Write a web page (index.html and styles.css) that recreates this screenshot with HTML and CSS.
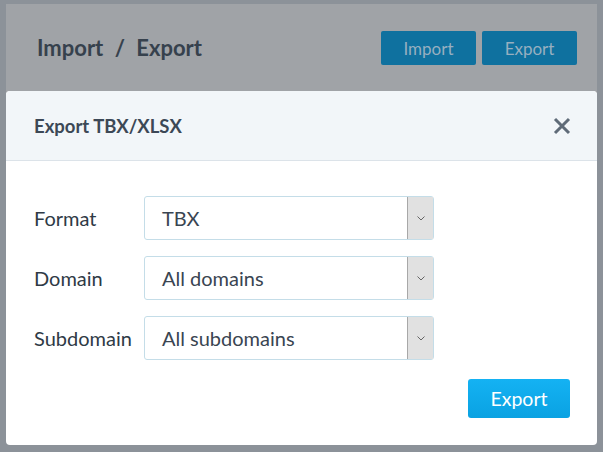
FILE: index.html
```html
<!DOCTYPE html>
<html lang="en">
<head>
    <meta charset="UTF-8">
    <meta name="viewport" content="width=device-width, initial-scale=1.0">
    <title>Import / Export</title>
    <link rel="stylesheet" href="styles.css">
</head>
<body>
    <div class="page">
        <div class="card">
            <h1>Import <span class="sep">/</span> Export</h1>
            <div class="actions">
                <button class="btn-dim">Import</button>
                <button class="btn-dim">Export</button>
            </div>
        </div>
    </div>

    <div class="modal">
        <div class="modal-header">
            <h2>Export TBX/XLSX</h2>
            <span class="close">
                <svg width="18" height="18" viewBox="0 0 18 18">
                    <path d="M2 2 L16 16 M16 2 L2 16" stroke="#5f6b78" stroke-width="3" stroke-linecap="butt" fill="none"/>
                </svg>
            </span>
        </div>
        <div class="modal-body">
            <div class="form-row">
                <label>Format</label>
                <div class="select">
                    <span class="value">TBX</span>
                    <span class="arrow"><svg width="8" height="5" viewBox="0 0 8 5"><path d="M0.5 0.5 L4 4 L7.5 0.5" stroke="#666" stroke-width="1" fill="none"/></svg></span>
                </div>
            </div>
            <div class="form-row">
                <label>Domain</label>
                <div class="select">
                    <span class="value">All domains</span>
                    <span class="arrow"><svg width="8" height="5" viewBox="0 0 8 5"><path d="M0.5 0.5 L4 4 L7.5 0.5" stroke="#666" stroke-width="1" fill="none"/></svg></span>
                </div>
            </div>
            <div class="form-row">
                <label>Subdomain</label>
                <div class="select">
                    <span class="value">All subdomains</span>
                    <span class="arrow"><svg width="8" height="5" viewBox="0 0 8 5"><path d="M0.5 0.5 L4 4 L7.5 0.5" stroke="#666" stroke-width="1" fill="none"/></svg></span>
                </div>
            </div>
            <div class="footer">
                <button class="btn-primary">Export</button>
            </div>
        </div>
    </div>
</body>
</html>
```

FILE: styles.css
```css
body {
    margin: 0;
    height: 452px;
    overflow: hidden;
    background-color: #8c9299;
    font-family: Lato, "Liberation Sans", sans-serif;
}
.page {
    padding: 4px 6px 0;
}
.card {
    background: #a0a3a7;
    height: 120px;
    padding: 27px 20px 0 31px;
    display: flex;
    justify-content: space-between;
    align-items: flex-start;
}
.card h1 {
    margin: 0;
    font-size: 22px;
    line-height: 34px;
    color: #36414d;
    font-weight: bold;
}
.card .sep {
    margin: 0 6px;
}
.actions {
    display: flex;
    gap: 6px;
}
.btn-dim {
    width: 95px;
    height: 34px;
    border: none;
    border-radius: 2px;
    background: #0f719f;
    color: #97afc0;
    font-family: inherit;
    font-size: 17px;
}
.modal {
    position: absolute;
    left: 6px;
    top: 91px;
    width: 591px;
    height: 354px;
    background: white;
    border-radius: 4px;
    overflow: hidden;
}
.modal-header {
    height: 69px;
    background: #f2f6f9;
    border-bottom: 1px solid #dce3e9;
    display: flex;
    align-items: center;
    justify-content: space-between;
    padding: 0 26px 0 28px;
}
.modal-header h2 {
    margin: 0;
    font-size: 18.5px;
    color: #3c4856;
}
.close {
    display: flex;
}
.modal-body {
    padding: 35px 27px 0 28px;
}
.form-row {
    display: flex;
    align-items: center;
    margin-bottom: 16px;
}
.form-row label {
    width: 110px;
    font-size: 20px;
    color: #2f3a46;
}
.select {
    width: 290px;
    height: 44px;
    box-sizing: border-box;
    border: 1px solid #c4dde8;
    border-radius: 3px;
    display: flex;
}
.select .value {
    flex: 1;
    padding-left: 17px;
    line-height: 42px;
    font-size: 20px;
    color: #3a4552;
}
.select .arrow {
    width: 25px;
    background: #e1e1e1;
    border-left: 1px solid #a8a8a8;
    display: flex;
    align-items: center;
    justify-content: center;
}
.footer {
    display: flex;
    justify-content: flex-end;
    margin-top: 19px;
}
.btn-primary {
    width: 102px;
    height: 39px;
    border: none;
    border-radius: 3px;
    background: linear-gradient(#14b2f3, #0aa2e2);
    color: white;
    font-family: inherit;
    font-size: 19.5px;
}
```
